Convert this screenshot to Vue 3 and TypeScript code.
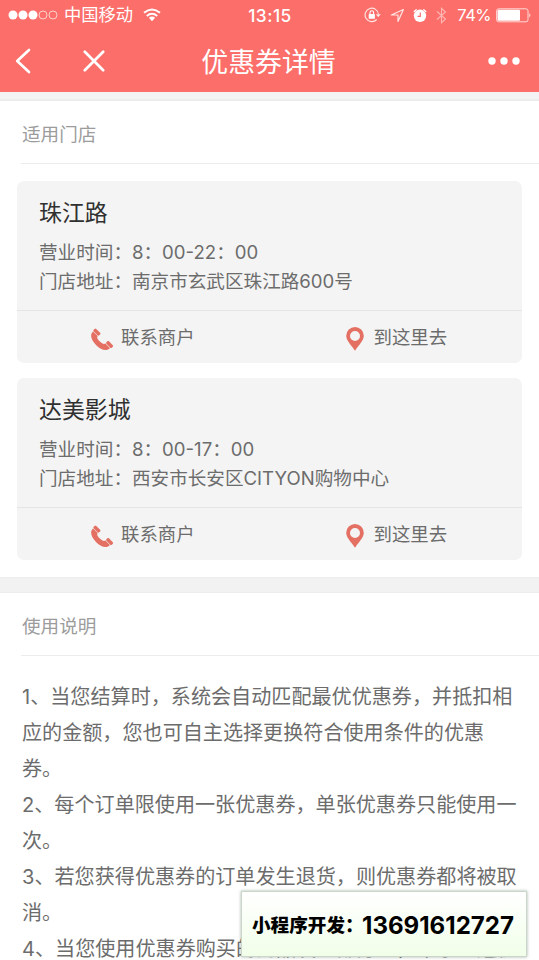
<script setup lang="ts">
interface Store {
  name: string
  hours: string
  address: string
}

const stores: Store[] = [
  { name: '珠江路', hours: '8：00-22：00', address: '南京市玄武区珠江路600号' },
  { name: '达美影城', hours: '8：00-17：00', address: '西安市长安区CITYON购物中心' },
]

const rules: string[][] = [
  ['1、当您结算时，系统会自动匹配最优优惠券，并抵扣相', '应的金额，您也可自主选择更换符合使用条件的优惠', '券。'],
  ['2、每个订单限使用一张优惠券，单张优惠券只能使用一', '次。'],
  ['3、若您获得优惠券的订单发生退货，则优惠券都将被取', '消。'],
  ['4、当您使用优惠券购买的商品发生部分退，不予退还优'],
]
</script>

<template>
  <div class="screen">
    <header class="top">
      <div class="status">
        <div class="side">
          <svg class="signal" width="50" height="12" viewBox="0 0 50 12">
            <g fill="#fff">
              <circle cx="5" cy="6" r="4.5" /><circle cx="15" cy="6" r="4.5" /><circle cx="25" cy="6" r="4.5" />
            </g>
            <g fill="none" stroke="#ffd9d7" stroke-width="0.9">
              <circle cx="35" cy="6" r="4" /><circle cx="45" cy="6" r="4" />
            </g>
          </svg>
          <span class="carrier">中国移动</span>
          <svg class="wifi" width="18" height="14" viewBox="0 0 18 14">
            <g fill="none" stroke="#fff" stroke-width="2">
              <path d="M1 4.8Q9-1.8 17 4.8" /><path d="M3.8 8Q9 3.6 14.2 8" />
            </g>
            <path d="M5.9 9.8Q9 7.4 12.1 9.8L9 13.2Z" fill="#fff" />
          </svg>
        </div>
        <span class="clock">13:15</span>
        <div class="side right">
          <svg class="lock" width="17" height="16" viewBox="0 0 17 16">
            <path d="M12.7 12.5A6.7 6.7 0 1 1 14.5 7.5" fill="none" stroke="#ffe5e3" stroke-width="1.2" />
            <path d="M11.8 7.2H16.8L14.3 10.2Z" fill="#ffe5e3" />
            <rect x="4.7" y="7" width="6.2" height="4.8" rx="0.5" fill="#fff" />
            <path d="M6 7V5.5a1.8 1.8 0 0 1 3.6 0V7" fill="none" stroke="#fff" stroke-width="1.1" />
          </svg>
          <svg class="locate" width="15" height="15" viewBox="0 0 15 15">
            <path d="M1.3 7L13.4 1.5L8 13.5V7Z" fill="none" stroke="#ffe5e3" stroke-width="1.2" stroke-linejoin="round" />
          </svg>
          <svg class="alarm" width="14" height="15" viewBox="0 0 14 15">
            <circle cx="7" cy="7.8" r="6.2" fill="#fff" />
            <path d="M1.2 3.6L3.2 1.8M12.8 3.6L10.8 1.8" stroke="#fff" stroke-width="1.3" stroke-linecap="round" />
            <path d="M7.3 4.5V8.3H4.5" fill="none" stroke="#fb6e6a" stroke-width="1.2" />
          </svg>
          <svg class="bluetooth" width="11" height="17" viewBox="0 0 11 17">
            <path d="M1 4.5L9.5 12L5.5 15.7V1.3L9.5 5L1 12.5" fill="none" stroke="#ffb5b2" stroke-width="1.1" />
          </svg>
          <span class="percent">74%</span>
          <svg class="battery" width="36" height="15" viewBox="0 0 36 15">
            <rect x=".6" y=".8" width="31.4" height="13" rx="2" fill="none" stroke="#ffd9d7" stroke-width="1" />
            <rect x="1.5" y="1.8" width="22.5" height="11" rx="1" fill="#fff" />
            <path d="M33.3 5Q35.5 7.3 33.3 9.6Z" fill="#ffe5e3" />
          </svg>
        </div>
      </div>
      <nav class="nav">
        <div class="nav-left">
          <svg width="16" height="26" viewBox="0 0 16 26">
            <path d="M14 2L2.2 13L14 24" fill="none" stroke="#fff" stroke-width="2.7" stroke-linecap="round" stroke-linejoin="round" />
          </svg>
          <svg width="22" height="22" viewBox="0 0 22 22">
            <path d="M1.8 1.8L20.2 20.2M20.2 1.8L1.8 20.2" stroke="#fff" stroke-width="2.7" stroke-linecap="round" />
          </svg>
        </div>
        <h1>优惠券详情</h1>
        <svg class="more" width="32" height="8" viewBox="0 0 32 8" fill="#fff">
          <circle cx="4" cy="4" r="3.7" /><circle cx="16" cy="4" r="3.7" /><circle cx="28" cy="4" r="3.7" />
        </svg>
      </nav>
    </header>
    <div class="strip"></div>

    <section>
      <h2>适用门店</h2>
      <div class="stores">
        <article v-for="store in stores" :key="store.name" class="card">
          <div class="info">
            <h3>{{ store.name }}</h3>
            <p>营业时间：{{ store.hours }}</p>
            <p>门店地址：{{ store.address }}</p>
          </div>
          <div class="actions">
            <div class="action call">
              <svg width="24" height="24" viewBox="0 0 24 24" fill="#e37062">
                <path d="M3 4.5C-.8 8.2 1.7 13.8 6.2 18.2C10.7 22.6 16.3 24.8 20 21.2L15.4 16.6C13.9 17.6 12.3 17 9.9 14.6C7.5 12.2 6.6 10.7 7.7 9.1Z" />
                <rect x="-1.8" y="-3.9" width="3.6" height="7.8" rx="1.2" transform="translate(6.9 5.1) rotate(-45)" />
                <rect x="-1.8" y="-3.9" width="3.6" height="7.8" rx="1.2" transform="translate(19.6 17.5) rotate(-45)" />
              </svg>
              <span>联系商户</span>
            </div>
            <div class="action go">
              <svg width="18" height="24" viewBox="0 0 18 24">
                <path fill="#e37062" fill-rule="evenodd" d="M9 0A8.8 8.8 0 0 0 .2 8.8C.2 13.7 5.5 18.5 9 23.7C12.5 18.5 17.8 13.7 17.8 8.8A8.8 8.8 0 0 0 9 0ZM9 4A5 5 0 1 1 9 14A5 5 0 1 1 9 4Z" />
              </svg>
              <span>到这里去</span>
            </div>
          </div>
        </article>
      </div>
    </section>

    <div class="divider"></div>

    <section>
      <h2>使用说明</h2>
      <div class="rules">
        <p v-for="(rule, i) in rules" :key="i">
          <span v-for="line in rule" :key="line">{{ line }}</span>
        </p>
      </div>
    </section>

    <aside class="contact">
      <span class="contact-label">小程序开发：</span><span class="contact-phone">13691612727</span>
    </aside>
  </div>
</template>

<style>
body {
  overflow: hidden;
}
</style>

<style scoped>
.screen {
  position: relative;
  width: 539px;
  height: 960px;
  overflow: hidden;
  background: #fff;
  color: #6c6c6c;
  font-family: Inter, "Noto Sans CJK SC", sans-serif;
  font-weight: 400;
}
h1, h2, h3, p {
  margin: 0;
}
svg {
  display: block;
  flex: none;
}
.top {
  height: 92px;
  background: #fb6e6a;
  color: #fff;
}
.status {
  display: grid;
  grid-template-columns: 1fr auto 1fr;
  align-items: center;
  height: 30px;
  padding: 0 7px 0 8px;
}
.side {
  display: flex;
  align-items: center;
}
.right {
  justify-content: flex-end;
}
.carrier {
  margin-left: 6px;
  font-size: 17.3px;
  line-height: 30px;
}
.wifi {
  margin-left: 10px;
}
.clock {
  font-size: 17.3px;
  font-weight: 500;
  letter-spacing: 0.5px;
}
.locate {
  margin-left: 9px;
}
.alarm {
  margin-left: 8px;
}
.bluetooth {
  margin-left: 9px;
}
.percent {
  margin-left: 10px;
  font-size: 16.5px;
  letter-spacing: -0.5px;
}
.battery {
  margin-left: 5px;
}
.nav {
  display: grid;
  grid-template-columns: 1fr auto 1fr;
  align-items: center;
  height: 62px;
  padding: 0 19px 0 15px;
}
.nav-left {
  display: flex;
  align-items: center;
  gap: 52px;
}
.nav h1 {
  padding: 1px 0 0 2px;
  font-size: 26.9px;
  font-weight: 400;
  line-height: 60px;
}
.more {
  justify-self: end;
}
.strip {
  box-sizing: border-box;
  height: 9px;
  border-bottom: 2px solid #ececec;
  background: #f4f3f3;
}
h2 {
  height: 62px;
  margin-left: 21px;
  padding-left: 1px;
  border-bottom: 1px solid #ececec;
  color: #9c9c9c;
  font-size: 18.6px;
  font-weight: 400;
  line-height: 66px;
}
.stores {
  display: flex;
  flex-direction: column;
  gap: 15px;
  padding: 17px 17px 17px;
}
.card {
  height: 182px;
  border-radius: 7px;
  background: #f4f4f4;
}
.info {
  box-sizing: border-box;
  height: 129px;
  padding: 14px 22px 0;
}
.info h3 {
  color: #303030;
  font-size: 22.9px;
  font-weight: 400;
  line-height: 36px;
}
.info p {
  margin-top: 7px;
  font-size: 18.6px;
  line-height: 29px;
  white-space: nowrap;
}
.info p + p {
  margin-top: 0;
}
.actions {
  display: grid;
  grid-template-columns: 1fr 1fr;
  height: 52px;
  border-top: 1px solid #e5e5e5;
}
.action {
  display: flex;
  align-items: center;
  padding-bottom: 2px;
  font-size: 18.4px;
}
.call {
  gap: 7px;
  padding-left: 73px;
}
.go {
  gap: 10px;
  padding-left: 76px;
}
.call svg {
  margin-top: 5px;
}
.go svg {
  margin-top: 5px;
}
.divider {
  box-sizing: border-box;
  height: 16px;
  border-top: 1px solid #ededed;
  border-bottom: 1px solid #ededed;
  background: #f2f2f2;
}
.rules {
  padding: 23px 0 0 22px;
  font-size: 20.1px;
  line-height: 36px;
}
.rules span {
  display: block;
  white-space: nowrap;
}
.contact {
  position: absolute;
  left: 241px;
  top: 891px;
  display: flex;
  align-items: center;
  box-sizing: border-box;
  width: 286px;
  height: 66px;
  padding: 2px 0 0 10px;
  border: 1px solid #cbd6cb;
  background: linear-gradient(#fff, #f1ffe9);
  box-shadow: 0 0 3px rgba(90, 110, 90, 0.5);
  color: #000;
  white-space: nowrap;
}
.contact-label {
  width: 110px;
  padding-bottom: 2px;
  font-family: "Noto Sans CJK SC", sans-serif;
  font-size: 18.6px;
  font-weight: 900;
  line-height: 28px;
}
.contact-phone {
  font-size: 24.1px;
  font-weight: 700;
}
</style>
